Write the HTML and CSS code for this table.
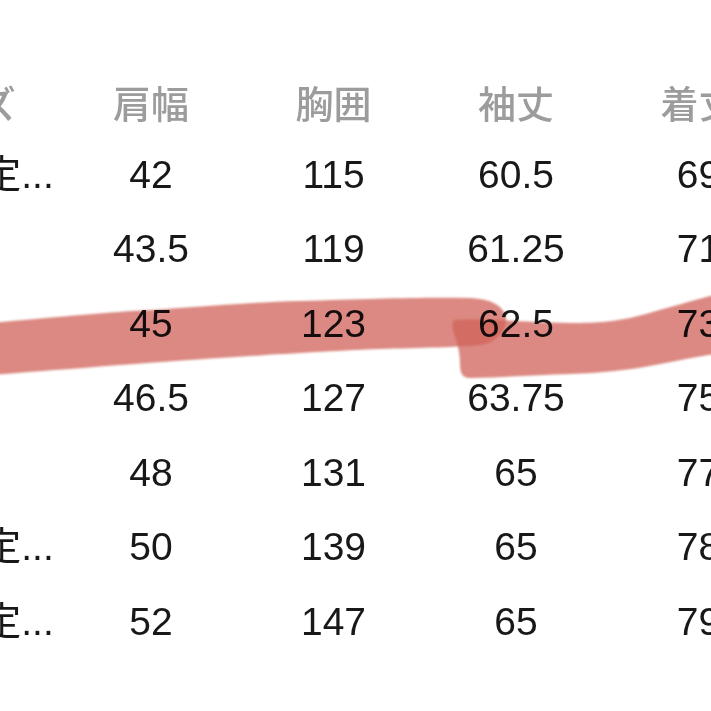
FILE: index.html
```html
<!DOCTYPE html>
<html lang="ja">
<head>
<meta charset="utf-8">
<title>サイズ表</title>
<link rel="stylesheet" href="styles.css">
</head>
<body>
<div class="page">
  <div class="table">
    <div class="cell head first head-first">サイズ</div>
    <div class="cell head">肩幅</div>
    <div class="cell head">胸囲</div>
    <div class="cell head">袖丈</div>
    <div class="cell head">着丈</div>

    <div class="cell first trunc">XS（推定...</div>
    <div class="cell">42</div><div class="cell">115</div><div class="cell">60.5</div><div class="cell">69</div>

    <div class="cell first">S</div>
    <div class="cell">43.5</div><div class="cell">119</div><div class="cell">61.25</div><div class="cell">71</div>

    <div class="cell first">M</div>
    <div class="cell">45</div><div class="cell">123</div><div class="cell">62.5</div><div class="cell">73</div>

    <div class="cell first">L</div>
    <div class="cell">46.5</div><div class="cell">127</div><div class="cell">63.75</div><div class="cell">75</div>

    <div class="cell first">XL</div>
    <div class="cell">48</div><div class="cell">131</div><div class="cell">65</div><div class="cell">77</div>

    <div class="cell first trunc">XXL（推定...</div>
    <div class="cell">50</div><div class="cell">139</div><div class="cell">65</div><div class="cell">78</div>

    <div class="cell first trunc">3XL（推定...</div>
    <div class="cell">52</div><div class="cell">147</div><div class="cell">65</div><div class="cell">79</div>
  </div>

  <svg class="marker" width="711" height="711" viewBox="0 0 711 711" aria-hidden="true">
    <defs>
      <filter id="soft" x="-5%" y="-20%" width="110%" height="140%">
        <feGaussianBlur stdDeviation="1"/>
      </filter>
    </defs>
    <g filter="url(#soft)" fill="rgb(208,100,89)" fill-opacity="0.76">
      <path d="M-10 323 C 60 317, 110 312, 150 310 C 220 305, 260 302, 300 301 C 370 299, 420 297, 470 298 C 492 299, 504 306, 506 318 C 507 330, 498 341, 482 345 C 460 347, 420 348, 380 349 C 330 351, 300 353, 250 356 C 200 359, 160 362, 120 365 C 70 369, 30 372, -10 375 Z"/>
      <path d="M455 320 C 480 318, 520 322, 570 323 C 600 323, 615 321, 630 318 C 655 312, 690 301, 722 293 L 722 353 C 700 356, 680 360, 655 365 C 630 370, 600 373, 570 374 C 540 375, 505 377, 470 378 C 462 378, 460 373, 460 363 C 460 350, 456 340, 453 330 C 452 325, 452 321, 455 320 Z"/>
    </g>
  </svg>
</div>
</body>
</html>
```
FILE: styles.css
```css
html, body {
  margin: 0;
  padding: 0;
  background: #ffffff;
}

body {
  width: 711px;
  height: 711px;
  overflow: hidden;
  font-family: "Liberation Sans", "Noto Sans CJK JP", sans-serif;
}

.page {
  position: relative;
  width: 711px;
  height: 711px;
  overflow: hidden;
  padding-top: 66px;
  box-sizing: border-box;
}

.table {
  display: grid;
  grid-template-columns: repeat(5, 182.5px);
  grid-template-rows: 71px repeat(7, 74.5px);
  margin-left: -122.75px;
}

.cell {
  display: flex;
  align-items: center;
  justify-content: center;
  font-size: 39px;
  line-height: 1;
  color: #181818;
  white-space: nowrap;
  overflow: visible;
}

.head {
  font-family: "Noto Sans CJK JP", "Liberation Sans", sans-serif;
  font-size: 38px;
  font-weight: 500;
  color: #9c9c9c;
}

.first {
  overflow: hidden;
}

.trunc {
  justify-content: flex-end;
  padding-right: 6px;
}

.head-first {
  justify-content: flex-end;
  padding-right: 44px;
}

.marker {
  position: absolute;
  top: 0;
  left: 0;
  mix-blend-mode: multiply;
  pointer-events: none;
}
```
